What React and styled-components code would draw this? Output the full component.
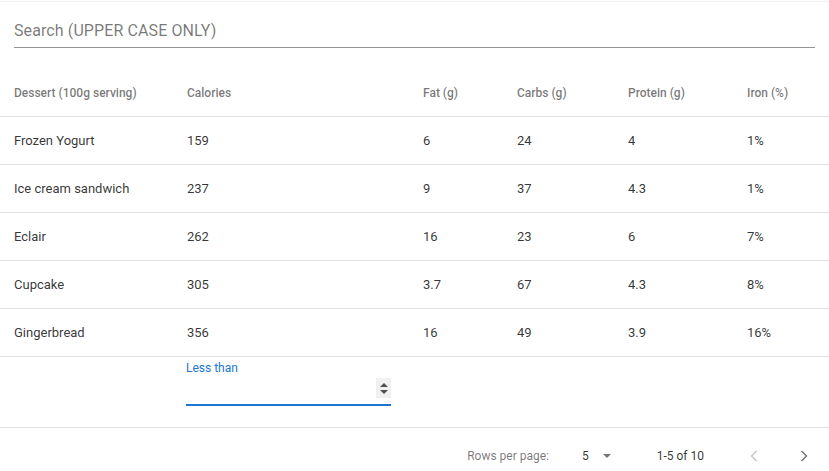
import React from "react";
import styled, { createGlobalStyle } from "styled-components";

const Global = createGlobalStyle`
  html, body { margin: 0; padding: 0; background: #fff; }
  body { font-family: Roboto, "Liberation Sans", Arial, sans-serif; }
  * { box-sizing: border-box; }
`;

const Paper = styled.div`
  margin-top: 2px;
  background: #fff;
  box-shadow: 0 -1px 1px rgba(0, 0, 0, 0.05);
  width: 829px;
`;

const SearchWrap = styled.div`
  padding: 13px 14px 0 14px;
`;

const SearchInput = styled.div`
  height: 33px;
  padding: 6px 0 7px 0;
  border-bottom: 1px solid rgba(0, 0, 0, 0.42);
  font-size: 16px;
  line-height: 19px;
  color: rgba(0, 0, 0, 0.54);
  letter-spacing: 0.1px;
`;

const COLS = "173px 236px 94px 111px 119px 1fr";

const Row = styled.div`
  display: grid;
  grid-template-columns: ${COLS};
  align-items: center;
  padding-left: 14px;
  height: ${(p) => p.$h}px;
  border-bottom: 1px solid #e0e0e0;
`;

const HeadRow = styled(Row)`
  margin-top: 21px;
`;

const HeadCell = styled.div`
  font-size: 12px;
  font-weight: 500;
  color: rgba(0, 0, 0, 0.54);
  white-space: nowrap;
`;

const Cell = styled.div`
  font-size: 13px;
  color: rgba(0, 0, 0, 0.8);
  white-space: nowrap;
`;

const FilterRow = styled.div`
  display: grid;
  grid-template-columns: ${COLS};
  padding-left: 14px;
  height: 71px;
  border-bottom: 1px solid #e0e0e0;
`;

const FilterField = styled.div`
  grid-column: 2;
  margin-left: -1px;
  width: 205px;
  padding-top: 4px;
  display: flex;
  flex-direction: column;
`;

const FilterLabel = styled.div`
  font-size: 12px;
  line-height: 14px;
  color: #1976d2;
`;

const FilterInput = styled.div`
  height: 31px;
  border-bottom: 2px solid #1976d2;
  display: flex;
  justify-content: flex-end;
  align-items: flex-start;
  padding-top: 3px;
`;

const Spinner = styled.div`
  width: 15px;
  height: 20px;
  background: #f0f0f0;
  display: flex;
  flex-direction: column;
  align-items: center;
  justify-content: center;
  gap: 3px;
`;

const Tri = styled.div`
  width: 0;
  height: 0;
  border-left: 4px solid transparent;
  border-right: 4px solid transparent;
  ${(p) =>
    p.$up
      ? "border-bottom: 4px solid #505050;"
      : "border-top: 4px solid #505050;"}
`;

const Footer = styled.div`
  height: 56px;
  display: flex;
  align-items: center;
  justify-content: flex-end;
  padding-right: 0;
  font-size: 12px;
  color: rgba(0, 0, 0, 0.54);
`;

const Caption = styled.span`
  color: rgba(0, 0, 0, 0.54);
`;

const Select = styled.div`
  display: flex;
  align-items: center;
  margin-left: 33px;
  font-size: 12px;
  color: rgba(0, 0, 0, 0.8);
`;

const Caret = styled.div`
  margin-left: 14px;
  width: 0;
  height: 0;
  border-left: 4.5px solid transparent;
  border-right: 4.5px solid transparent;
  border-top: 4.5px solid #757575;
`;

const Range = styled.span`
  margin-left: 46px;
  color: rgba(0, 0, 0, 0.8);
`;

const NavButton = styled.button`
  border: 0;
  background: none;
  padding: 0;
  width: 50px;
  height: 40px;
  display: flex;
  align-items: center;
  justify-content: center;
  cursor: pointer;
  color: ${(p) => (p.disabled ? "#c4c4c4" : "#6e6e6e")};
  &:first-of-type {
    margin-left: 25px;
  }
`;

const Chevron = ({ dir }) => (
  <svg width="8" height="12" viewBox="0 0 8 12" fill="none">
    <polyline
      points={dir === "left" ? "6.5,1 1.5,6 6.5,11" : "1.5,1 6.5,6 1.5,11"}
      stroke="currentColor"
      strokeWidth="1.4"
    />
  </svg>
);

const headers = [
  "Dessert (100g serving)",
  "Calories",
  "Fat (g)",
  "Carbs (g)",
  "Protein (g)",
  "Iron (%)",
];

const rows = [
  ["Frozen Yogurt", "159", "6", "24", "4", "1%"],
  ["Ice cream sandwich", "237", "9", "37", "4.3", "1%"],
  ["Eclair", "262", "16", "23", "6", "7%"],
  ["Cupcake", "305", "3.7", "67", "4.3", "8%"],
  ["Gingerbread", "356", "16", "49", "3.9", "16%"],
];

export default function App() {
  return (
    <>
      <Global />
      <Paper>
        <SearchWrap>
          <SearchInput>Search (UPPER CASE ONLY)</SearchInput>
        </SearchWrap>
        <HeadRow $h={48}>
          {headers.map((h) => (
            <HeadCell key={h}>{h}</HeadCell>
          ))}
        </HeadRow>
        {rows.map((r) => (
          <Row key={r[0]} $h={48}>
            {r.map((c, i) => (
              <Cell key={i}>{c}</Cell>
            ))}
          </Row>
        ))}
        <FilterRow>
          <FilterField>
            <FilterLabel>Less than</FilterLabel>
            <FilterInput>
              <Spinner>
                <Tri $up />
                <Tri />
              </Spinner>
            </FilterInput>
          </FilterField>
        </FilterRow>
        <Footer>
          <Caption>Rows per page:</Caption>
          <Select>
            5
            <Caret />
          </Select>
          <Range>1-5 of 10</Range>
          <NavButton disabled>
            <Chevron dir="left" />
          </NavButton>
          <NavButton>
            <Chevron dir="right" />
          </NavButton>
        </Footer>
      </Paper>
    </>
  );
}
